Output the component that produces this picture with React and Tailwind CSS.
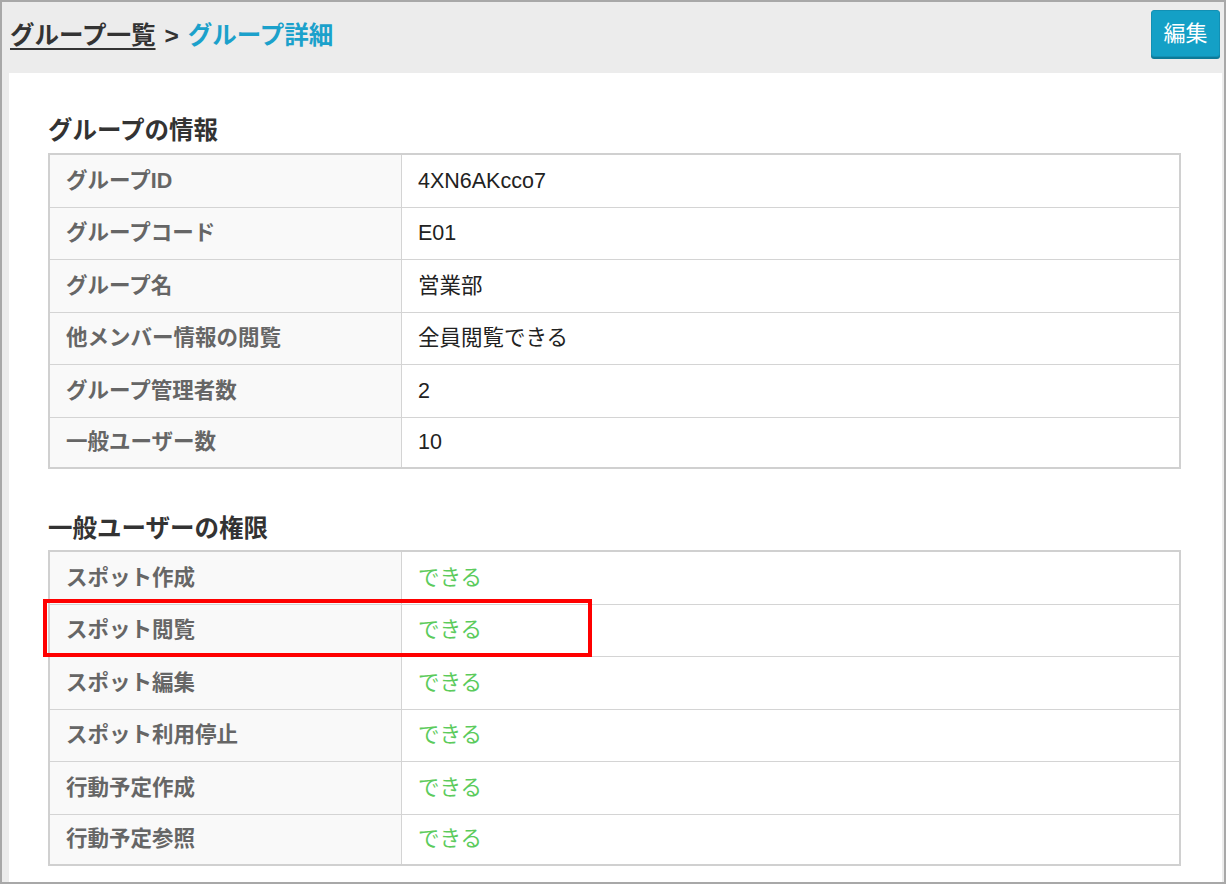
import React from "react";

const font = { fontFamily: '"Liberation Sans", "Noto Sans CJK JP", sans-serif' };

const info = [
  ["グループID", "4XN6AKcco7"],
  ["グループコード", "E01"],
  ["グループ名", "営業部"],
  ["他メンバー情報の閲覧", "全員閲覧できる"],
  ["グループ管理者数", "2"],
  ["一般ユーザー数", "10"],
];

const perms = [
  "スポット作成",
  "スポット閲覧",
  "スポット編集",
  "スポット利用停止",
  "行動予定作成",
  "行動予定参照",
];

function Row({ label, value, green, last }) {
  return (
    <div className={`flex ${last ? "h-[49px]" : "h-[52.6px] border-b border-[#d4d4d4]"}`}>
      <div className="w-[352px] shrink-0 bg-[#f9f9f9] border-r border-[#d4d4d4] flex items-center pl-[16px] text-[21.5px] font-bold text-[#666]">
        {label}
      </div>
      <div className={`flex items-center pl-[16px] text-[21.5px] ${green ? "text-[#5ccb5c]" : "text-[#222]"}`}>
        {value}
      </div>
    </div>
  );
}

export default function App() {
  return (
    <div style={font} className="w-[1226px] h-[884px] border-2 border-[#a8a8a8] bg-[#ececec] flex flex-col overflow-hidden">
      <div className="h-[71px] shrink-0 flex items-center justify-between pl-[8px] pr-[3px]">
        <div className="text-[24.5px] font-bold flex items-center gap-[9px] -mt-[3px]">
          <span className="text-[#333] underline decoration-2 underline-offset-[4px]">グループ一覧</span>
          <span className="text-[#333]">&gt;</span>
          <span className="text-[#1ba1cb]">グループ詳細</span>
        </div>
        <button className="w-[69px] h-[47px] -mt-[8px] mr-[1px] rounded-[3px] bg-[#14a0c6] text-white text-[22px] shadow-[0_2px_0_#0d7a98] border border-[#1290b4]">
          編集
        </button>
      </div>
      <div className="flex-1 bg-white ml-[7px] mr-[2px] pl-[39px] pr-[41px]">
        <h2 className="mt-[44px] h-[28px] leading-[28px] text-[24.5px] font-bold text-[#333]">グループの情報</h2>
        <div className="mt-[8px] border-2 border-[#d0d0d0]">
          {info.map(([l, v], i) => (
            <Row key={l} label={l} value={v} last={i === info.length - 1} />
          ))}
        </div>
        <h2 className="mt-[46px] h-[28px] leading-[28px] text-[24.5px] font-bold text-[#333]">一般ユーザーの権限</h2>
        <div className="relative mt-[7px] border-2 border-[#d0d0d0]">
          {perms.map((l, i) => (
            <Row key={l} label={l} value="できる" green last={i === perms.length - 1} />
          ))}
          <div className="absolute left-[-7px] top-[47px] w-[549px] h-[58px] border-[4px] border-[#ff0000]" />
        </div>
      </div>
    </div>
  );
}
